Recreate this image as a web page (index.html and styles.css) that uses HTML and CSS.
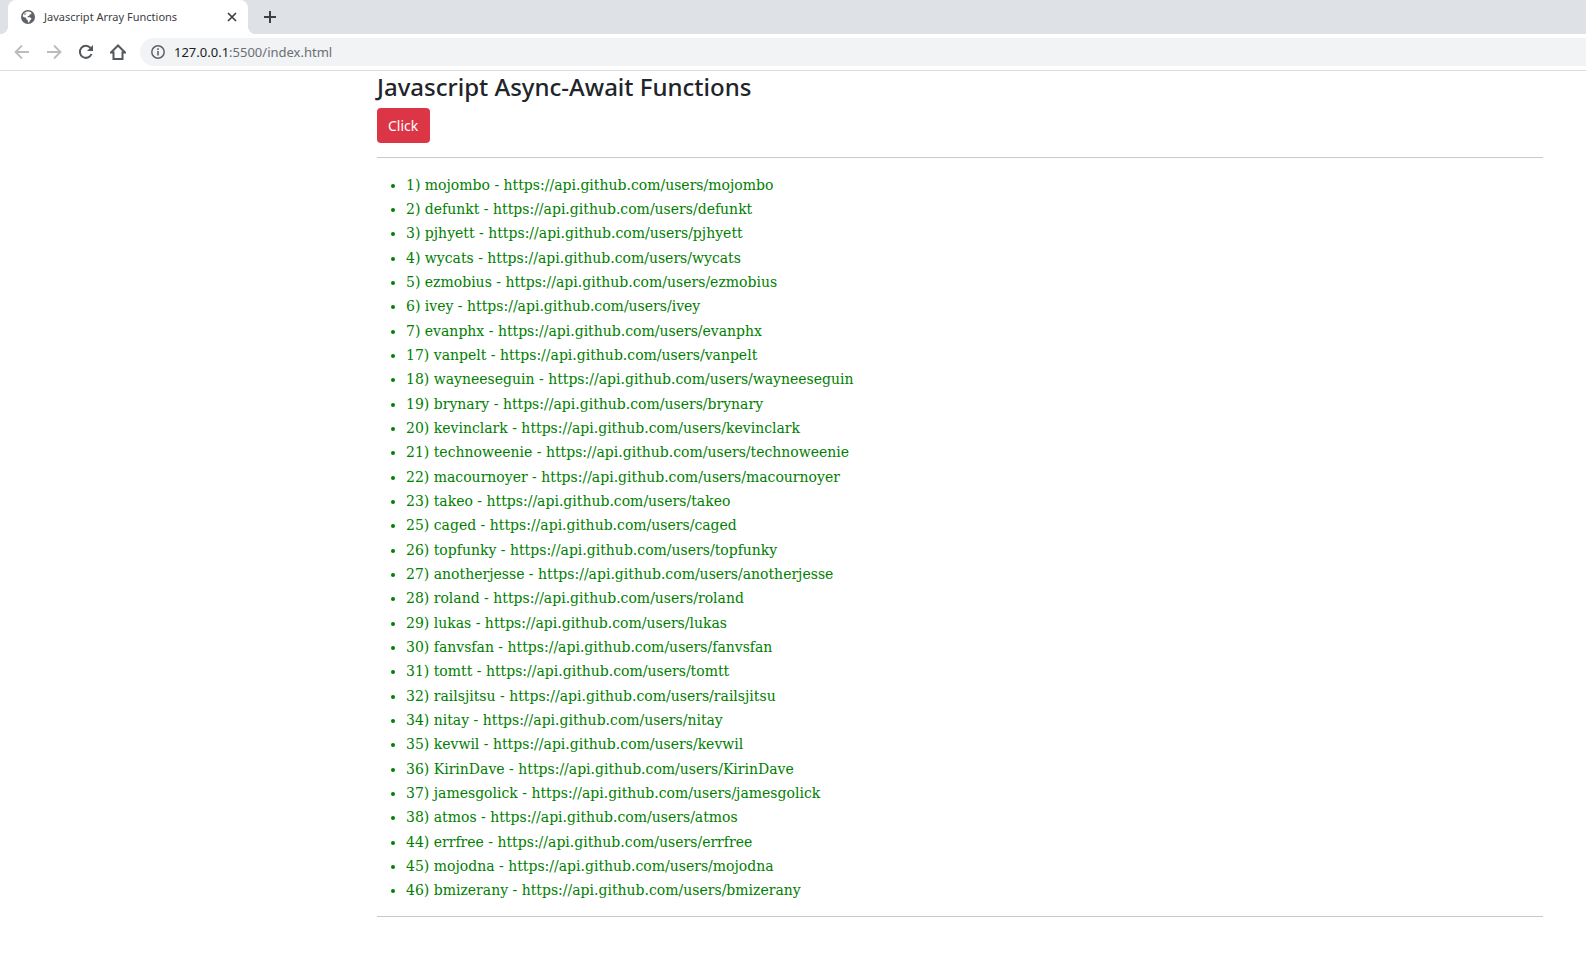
FILE: index.html
```html
<!DOCTYPE html>
<html lang="en">
<head>
<meta charset="utf-8">
<title>Javascript Array Functions</title>
<link rel="stylesheet" href="styles.css">
</head>
<body>
<header class="browser">
  <div class="tabstrip">
    <div class="tab">
      <svg class="favicon" viewBox="0 0 14 14" width="14" height="14" aria-hidden="true">
        <circle cx="7" cy="7" r="7" fill="#5f6368"/>
        <path d="M7.600 1.600C9.300 1.900 10 2.500 10.600 3.200L9.800 4.200 8.600 4.500 8.300 5.700 6.600 6.300 6.800 7.200 9 7.300 10.300 8.300 10.200 9.500 8.800 10.500 8.300 12.200 7 12.500 6.800 10.300 5.300 9.200 5.200 8 1.700 6.400C2 3.500 4.400 1.500 7.600 1.600Z" fill="#fff"/>
        <path d="M3 3.200L5 2.600 5.500 3.500 4.600 4.800 3 5.200Z" fill="#5f6368" opacity=".5"/>
      </svg>
      <span class="tab-title">Javascript Array Functions</span>
      <button class="icon-button tab-close" type="button" aria-label="Close tab">
        <svg viewBox="0 0 10 10" width="10" height="10"><path d="M1 1L9 9M9 1L1 9" fill="none" stroke="#3c4043" stroke-width="1.700"/></svg>
      </button>
    </div>
    <button class="icon-button new-tab" type="button" aria-label="New tab">
      <svg viewBox="0 0 12 12" width="12" height="12"><path d="M6 0V12M0 6H12" fill="none" stroke="#3c4043" stroke-width="2"/></svg>
    </button>
  </div>
  <div class="toolbar">
    <button class="icon-button" type="button" aria-label="Back" disabled>
      <svg viewBox="0 0 16 16" width="16" height="16"><path d="M15 8H2M8 1.500L1.500 8 8 14.500" fill="none" stroke="#babcbe" stroke-width="1.800"/></svg>
    </button>
    <button class="icon-button" type="button" aria-label="Forward" disabled>
      <svg viewBox="0 0 16 16" width="16" height="16"><path d="M1 8H14M8 1.500L14.500 8 8 14.500" fill="none" stroke="#babcbe" stroke-width="1.800"/></svg>
    </button>
    <button class="icon-button" type="button" aria-label="Reload">
      <svg viewBox="0 0 16 16" width="16" height="16"><path d="M13.500 10A6 6 0 1 1 12.500 4" fill="none" stroke="#54585d" stroke-width="2"/><path d="M15 1V7H9Z" fill="#54585d"/></svg>
    </button>
    <button class="icon-button" type="button" aria-label="Home">
      <svg viewBox="0 0 16 16" width="16" height="16"><path d="M1 8.500L8 1.500 15 8.500H12.500V15H3.500V8.500Z" fill="none" stroke="#54585d" stroke-width="2"/></svg>
    </button>
    <div class="address">
      <svg viewBox="0 0 14 14" width="14" height="14" aria-hidden="true"><circle cx="7" cy="7" r="6.200" fill="none" stroke="#5f6368" stroke-width="1.500"/><path d="M7 6V10.500M7 3.300V5" stroke="#5f6368" stroke-width="1.600"/></svg>
      <a class="url" href="#"><span class="host">127.0.0.1</span>:5500/index.html</a>
    </div>
  </div>
</header>
<main class="page">
  <h1 class="title">Javascript Async-Await Functions</h1>
  <button class="click" type="button">Click</button>
  <hr class="rule">
  <ul class="users">
    <li>1) mojombo - https://api.github.com/users/mojombo</li>
    <li>2) defunkt - https://api.github.com/users/defunkt</li>
    <li>3) pjhyett - https://api.github.com/users/pjhyett</li>
    <li>4) wycats - https://api.github.com/users/wycats</li>
    <li>5) ezmobius - https://api.github.com/users/ezmobius</li>
    <li>6) ivey - https://api.github.com/users/ivey</li>
    <li>7) evanphx - https://api.github.com/users/evanphx</li>
    <li>17) vanpelt - https://api.github.com/users/vanpelt</li>
    <li>18) wayneeseguin - https://api.github.com/users/wayneeseguin</li>
    <li>19) brynary - https://api.github.com/users/brynary</li>
    <li>20) kevinclark - https://api.github.com/users/kevinclark</li>
    <li>21) technoweenie - https://api.github.com/users/technoweenie</li>
    <li>22) macournoyer - https://api.github.com/users/macournoyer</li>
    <li>23) takeo - https://api.github.com/users/takeo</li>
    <li>25) caged - https://api.github.com/users/caged</li>
    <li>26) topfunky - https://api.github.com/users/topfunky</li>
    <li>27) anotherjesse - https://api.github.com/users/anotherjesse</li>
    <li>28) roland - https://api.github.com/users/roland</li>
    <li>29) lukas - https://api.github.com/users/lukas</li>
    <li>30) fanvsfan - https://api.github.com/users/fanvsfan</li>
    <li>31) tomtt - https://api.github.com/users/tomtt</li>
    <li>32) railsjitsu - https://api.github.com/users/railsjitsu</li>
    <li>34) nitay - https://api.github.com/users/nitay</li>
    <li>35) kevwil - https://api.github.com/users/kevwil</li>
    <li>36) KirinDave - https://api.github.com/users/KirinDave</li>
    <li>37) jamesgolick - https://api.github.com/users/jamesgolick</li>
    <li>38) atmos - https://api.github.com/users/atmos</li>
    <li>44) errfree - https://api.github.com/users/errfree</li>
    <li>45) mojodna - https://api.github.com/users/mojodna</li>
    <li>46) bmizerany - https://api.github.com/users/bmizerany</li>
  </ul>
  <hr class="rule">
</main>
</body>
</html>
```
FILE: styles.css
```css
* { box-sizing: border-box; }
body { margin: 0; background: #fff; color: #212529; font-family: "Noto Sans", sans-serif; }
.icon-button { display: flex; align-items: center; justify-content: center; width: 16px; height: 16px; padding: 0; border: 0; background: none; flex: none; }
.icon-button svg { display: block; }
.browser { border-bottom: 1px solid #dadce0; }
.tabstrip { display: flex; align-items: center; gap: 16px; height: 34px; padding-left: 8px; background: #dee1e6; }
.tab { position: relative; display: flex; align-items: center; width: 240px; height: 34px; padding: 0 11px 0 13px; border-radius: 8px 8px 0 0; background: #fff; }
.tab::before, .tab::after { content: ""; position: absolute; bottom: 0; width: 8px; height: 8px; }
.tab::before { right: 100%; background: radial-gradient(circle at 0 0, #dee1e6 8px, #fff 8px); }
.tab::after { left: 100%; background: radial-gradient(circle at 100% 0, #dee1e6 8px, #fff 8px); }
.favicon { flex: none; }
.tab-title { flex: 1; margin-left: 9px; font-size: 11px; line-height: 16px; color: #3c4043; white-space: nowrap; }
.new-tab { width: 12px; }
.tab-close { width: 10px; }
.toolbar { display: flex; align-items: center; gap: 16px; height: 36px; padding-left: 14px; }
.address { display: flex; align-items: center; flex: 1; gap: 9px; height: 28px; margin-left: -2px; padding-left: 11px; border-radius: 14px 0 0 14px; background: #f1f3f4; }
.url { font-size: 13px; line-height: 20px; color: #6b6f74; text-decoration: none; }
.host { color: #202124; }
.page { padding: 1px 43px 40px 377px; }
.title { margin: 0 0 6px; font-size: 24px; font-weight: 500; line-height: 30px; }
.click { display: block; height: 35px; padding: 0 12px 0 11px; border: 0; border-radius: 4px; background: #dc3545; color: #fff; font-family: inherit; font-size: 14px; line-height: 20px; }
.rule { height: 1px; margin: 14px 0 15px; border: 0; background: #c8c9ca; }
.users { margin: 0; padding-left: 29px; color: green; font-family: "DejaVu Serif", serif; font-size: 14px; line-height: 24px; }
.users li:nth-child(3n) { margin-bottom: 1px; }
```
